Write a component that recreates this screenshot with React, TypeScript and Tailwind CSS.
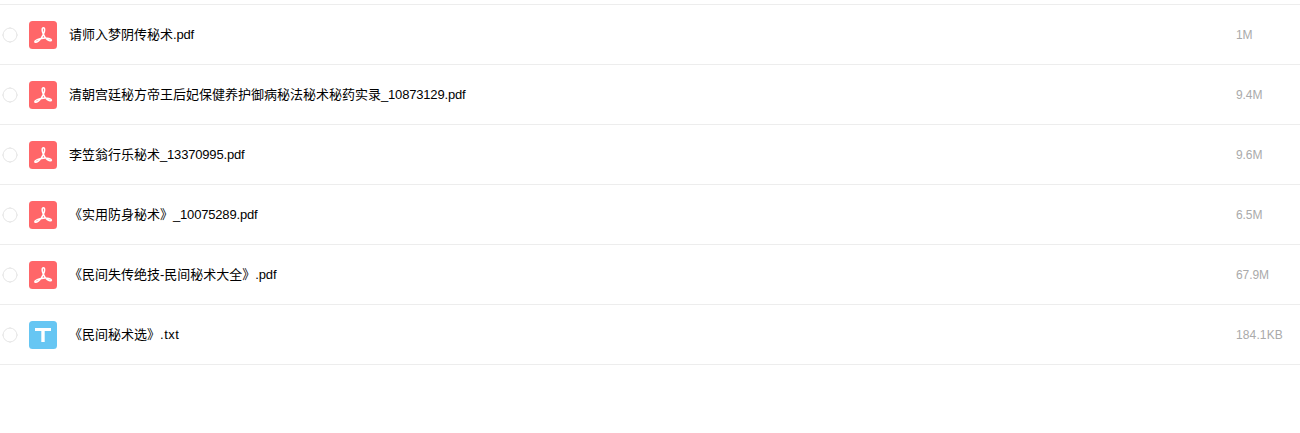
import clsx from "clsx";

type FileItem = {
  title: string;
  suffix: string;
  size: string;
  type: "pdf" | "txt";
};

const files: FileItem[] = [
  { title: "请师入梦阴传秘术", suffix: ".pdf", size: "1M", type: "pdf" },
  {
    title: "清朝宫廷秘方帝王后妃保健养护御病秘法秘术秘药实录",
    suffix: "_10873129.pdf",
    size: "9.4M",
    type: "pdf",
  },
  { title: "李笠翁行乐秘术", suffix: "_13370995.pdf", size: "9.6M", type: "pdf" },
  { title: "《实用防身秘术》", suffix: "_10075289.pdf", size: "6.5M", type: "pdf" },
  { title: "《民间失传绝技-民间秘术大全》", suffix: ".pdf", size: "67.9M", type: "pdf" },
  { title: "《民间秘术选》", suffix: ".txt", size: "184.1KB", type: "txt" },
];

function CheckCircle() {
  return (
    <svg viewBox="0 0 16 16" className="h-4 w-4 shrink-0" fill="none" stroke="#e6e6e6">
      <circle cx="8" cy="8" r="6.9" />
      <path d="M8 0v1.2M8 14.8V16M0 8h1.2M14.8 8H16" />
    </svg>
  );
}

function PdfIcon() {
  return (
    <svg viewBox="0 0 28 28" className="h-7 w-7 shrink-0" fill="none">
      <rect width="28" height="28" rx="3.5" fill="#ff6669" />
      <path
        d="M14.4 13.2C12.9 10.6 12.7 6.8 14.4 6.8s1.5 3.8 0 6.4c-1.2 2.8-2.8 5.2-4.8 6.7-1.9 1.4-3.6 1.6-3.8.8-.3-1.2 3.8-3.1 8.4-3.5 4.2-.4 8.2.5 8.2 1.9 0 1.1-2.5.8-4.3-.7-1.7-1.3-2.8-2.9-3.7-5.2Z"
        stroke="#fff"
        strokeWidth="1.55"
        strokeLinejoin="round"
      />
    </svg>
  );
}

function TxtIcon() {
  return (
    <svg viewBox="0 0 28 28" className="h-7 w-7 shrink-0">
      <rect width="28" height="28" rx="3.5" fill="#66c6f3" />
      <rect x="6" y="7" width="16" height="3" fill="#fff" />
      <rect x="12.3" y="7" width="3.4" height="14" fill="#fff" />
    </svg>
  );
}

function FileRow({ file }: { file: FileItem }) {
  const isPdf = file.type === "pdf";

  return (
    <li className="flex h-[60px] items-center border-b border-[#ededed] pl-0.5">
      <CheckCircle />
      <span className="ml-[11px]">{isPdf ? <PdfIcon /> : <TxtIcon />}</span>
      <span className="ml-3 flex-1 text-[13px] leading-5 whitespace-nowrap text-black">
        {file.title}
        <span className={isPdf ? "tracking-[-0.18px]" : "tracking-[0.5px]"}>
          {file.suffix}
        </span>
      </span>
      <span
        className={clsx(
          "w-16 text-xs text-[#aaa]",
          isPdf ? "tracking-[-0.1px]" : "tracking-[0.12px]"
        )}
      >
        {file.size}
      </span>
    </li>
  );
}

export default function App() {
  return (
    <main className="min-h-screen bg-white pt-1 font-['Liberation_Sans','Noto_Sans_CJK_SC',sans-serif]">
      <ul className="border-t border-[#ededed]">
        {files.map((file) => (
          <FileRow key={file.title} file={file} />
        ))}
      </ul>
    </main>
  );
}
